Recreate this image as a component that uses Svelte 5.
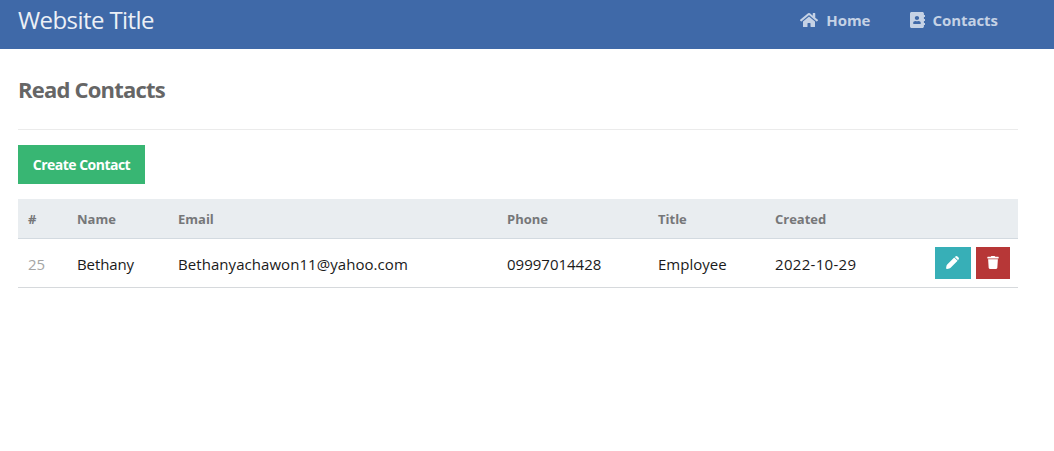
<script>
  const columns = ['#', 'Name', 'Email', 'Phone', 'Title', 'Created', ''];
  const contacts = [
    { id: 25, name: 'Bethany', email: 'Bethanyachawon11@yahoo.com', phone: '09997014428', title: 'Employee', created: '2022-10-29' }
  ];
</script>

<nav>
  <h1>Website Title</h1>
  <a class="home" href="#home">
    <svg width="18" height="16" viewBox="0 0 576 512"><path d="M280.4 148.3L96 300.1V464a16 16 0 0 0 16 16l112-.3a16 16 0 0 0 16-16V368a16 16 0 0 1 16-16h64a16 16 0 0 1 16 16v95.6a16 16 0 0 0 16 16.1l112 .3a16 16 0 0 0 16-16V300L295.7 148.3a12.2 12.2 0 0 0-15.3 0zM571.6 251.5L488 182.6V44a12 12 0 0 0-12-12h-56a12 12 0 0 0-12 12v72.6L318.5 43a48 48 0 0 0-61 0L4.3 251.5a12 12 0 0 0-1.6 16.9l25.5 31a12 12 0 0 0 16.9 1.6l235.2-193.7a12.2 12.2 0 0 1 15.3 0L530.9 301a12 12 0 0 0 16.9-1.6l25.5-31a12 12 0 0 0-1.7-16.9z" /></svg>
    <span>Home</span>
  </a>
  <a class="book" href="#contacts">
    <svg width="15" height="16" viewBox="0 0 448 512" preserveAspectRatio="none"><path d="M436 160c6.6 0 12-5.4 12-12v-40c0-6.6-5.4-12-12-12h-20V48c0-26.500-21.500-48-48-48H48C21.500 0 0 21.500 0 48v416c0 26.500 21.500 48 48 48h320c26.500 0 48-21.500 48-48v-48h20c6.600 0 12-5.400 12-12v-40c0-6.600-5.400-12-12-12h-20v-64h20c6.600 0 12-5.400 12-12v-40c0-6.600-5.400-12-12-12h-20v-64h20zm-228-32c35.300 0 64 28.700 64 64s-28.700 64-64 64-64-28.700-64-64 28.700-64 64-64zm112 236.800c0 10.600-10 19.200-22.400 19.200H118.400C106 384 96 375.400 96 364.800v-19.200c0-31.800 30.100-57.600 67.200-57.600h5c12.300 5.100 25.700 8 39.800 8s27.600-2.900 39.800-8h5c37.100 0 67.200 25.800 67.200 57.600v19.200z" /></svg>
    <span>Contacts</span>
  </a>
</nav>

<main>
  <h2><span>Read Contacts</span></h2>
  <a class="create" href="#create"><span>Create Contact</span></a>
  <table>
    <colgroup>
      <col class="c-id" /><col class="c-name" /><col class="c-email" /><col class="c-phone" /><col class="c-title" /><col />
      <col class="c-actions" />
    </colgroup>
    <thead>
      <tr>{#each columns as column}<th>{column}</th>{/each}</tr>
    </thead>
    <tbody>
      {#each contacts as c}
        <tr>
          <td class="id">{c.id}</td>
          <td class="name">{c.name}</td>
          <td class="email">{c.email}</td>
          <td class="phone">{c.phone}</td>
          <td class="title">{c.title}</td>
          <td class="date">{c.created}</td>
          <td class="actions">
            <div>
              <a class="edit" href="#edit" aria-label="Edit">
                <svg width="13" height="13" viewBox="0 0 13 13"><path d="M8.200 1.400L1.200 8.400Q.6 9 .5 9.800L.1 11.900Q0 13 1.100 12.900L3.200 12.500Q4 12.400 4.600 11.800L11.600 4.800Z" /><path d="M8.800.9L9.400.5Q10.500-.4 11.500.5L12.500 1.500Q13.400 2.500 12.500 3.600L12.100 4.200Z" /></svg>
              </a>
              <a class="trash" href="#delete" aria-label="Delete">
                <svg width="12" height="13" viewBox="0 0 448 512"><path d="M432 32H312l-9.400-18.700A24 24 0 0 0 281.100 0H166.800a23.700 23.700 0 0 0-21.400 13.300L136 32H16A16 16 0 0 0 0 48v32a16 16 0 0 0 16 16h416a16 16 0 0 0 16-16V48a16 16 0 0 0-16-16zM53.200 467a48 48 0 0 0 47.900 45h245.800a48 48 0 0 0 47.900-45L416 128H32z" /></svg>
              </a>
            </div>
          </td>
        </tr>
      {/each}
    </tbody>
  </table>
</main>

<style>
  :global(body) {
    margin: 0;
    background: #fff;
    font-family: "Open Sans", "Noto Sans", sans-serif;
    font-size: 16px;
  }
  * { box-sizing: border-box; }
  a { text-decoration: none; }
  svg { display: block; fill: currentColor; flex: none; }
  nav {
    display: flex;
    align-items: center;
    height: 49px;
    padding: 0 56px 9px 18px;
    background: #3f69a8;
  }
  h1 {
    flex: 1;
    margin: 0;
    color: #ecf0f6;
    font-size: 24px;
    font-weight: 400;
    line-height: 32px;
    letter-spacing: -0.58px;
  }
  nav a {
    display: flex;
    align-items: center;
    gap: 8px;
    color: #c5d2e5;
    font-size: 15px;
    font-weight: 700;
    line-height: 20px;
  }
  nav span { letter-spacing: -0.05px; }
  .home { margin-right: 39px; }
  .book { gap: 7px; }
  .home { margin-right: 40px; }
  main { width: 1000px; margin-left: 18px; }
  h2 {
    height: 81px;
    margin: 0 0 15px;
    padding-top: 25px;
    border-bottom: 1px solid #ebebeb;
    color: #666;
    font-size: 22px;
    line-height: 30px;
    letter-spacing: -0.8px;
  }
  .create {
    display: flex;
    align-items: center;
    justify-content: center;
    width: 127px;
    height: 39px;
    margin-bottom: 15px;
    background: #38b673;
    color: #fff;
    font-size: 14px;
    font-weight: 700;
    letter-spacing: -0.52px;
  }
  table { width: 100%; table-layout: fixed; border-collapse: separate; border-spacing: 0; }
  .c-id { width: 49px; }
  .c-name { width: 101px; }
  .c-email { width: 329px; }
  .c-phone { width: 151px; }
  .c-title { width: 117px; }
  .c-actions { width: 120px; }
  th, td { padding: 0 0 0 10px; text-align: left; white-space: nowrap; }
  th {
    height: 40px;
    background: #e9edf0;
    border-bottom: 1px solid #d3dae0;
    color: #767779;
    font-size: 13px;
    font-weight: 700;
  }
  td {
    height: 49px;
    padding-top: 2px;
    border-bottom: 1px solid #d6d9dc;
    color: #1a1a1a;
    font-size: 15px;
  }
  .id { color: #a5a5a5; }
  .email { letter-spacing: 0.06px; }
  .date { letter-spacing: 0.3px; }
  .name { letter-spacing: -0.1px; }
  .actions { padding: 0 8px 0 0; }
  .actions div { display: flex; justify-content: flex-end; gap: 5px; }
  .actions a {
    display: flex;
    align-items: center;
    justify-content: center;
    height: 32px;
    padding-bottom: 1px;
    color: #fff;
  }
  .actions .edit { width: 36px; padding-right: 1px; background: #37afb7; }
  .trash { width: 34px; background: #b73737; }
</style>
